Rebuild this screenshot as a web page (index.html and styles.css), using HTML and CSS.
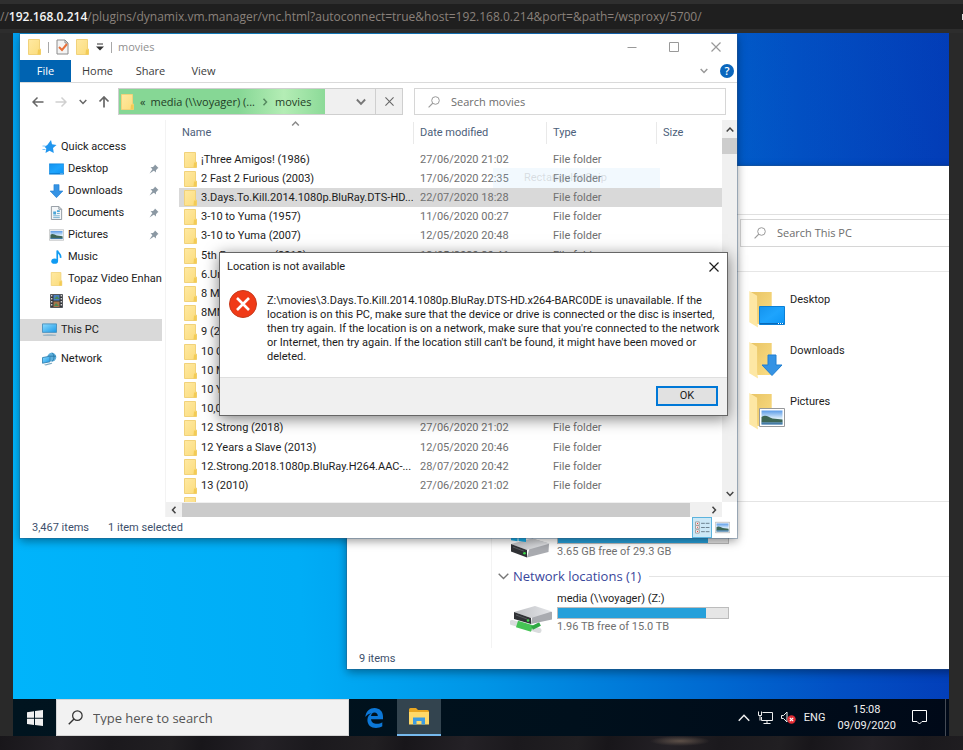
FILE: index.html
```html
<!DOCTYPE html>
<html lang="en">
<head>
<meta charset="utf-8">
<title>Remote desktop</title>
<link rel="stylesheet" href="styles.css">
</head>
<body>
<svg class="sprite" aria-hidden="true">
  <defs>
    <linearGradient id="gFold" x1="0" y1="0" x2="1" y2="1"><stop offset="0" stop-color="#ffe9a2"/><stop offset="1" stop-color="#fbdc7c"/></linearGradient>
    <linearGradient id="gBack" x1="0" y1="0" x2="1" y2="1"><stop offset="0" stop-color="#e8c465"/><stop offset="1" stop-color="#fbdd84"/></linearGradient>
    <linearGradient id="gScreen" x1="0" y1="0" x2="1" y2="1"><stop offset="0" stop-color="#1493ee"/><stop offset=".5" stop-color="#1ea4fd"/><stop offset="1" stop-color="#0c95f5"/></linearGradient>
    <linearGradient id="gPc" x1="0" y1="0" x2="1" y2="1"><stop offset="0" stop-color="#8ddcff"/><stop offset="1" stop-color="#1a98e6"/></linearGradient>
    <linearGradient id="gSky" x1="0" y1="0" x2="0" y2="1"><stop offset="0" stop-color="#5a9be8"/><stop offset=".6" stop-color="#e2f1fb"/><stop offset="1" stop-color="#7fb0d8"/></linearGradient>
    <linearGradient id="gDisk" x1="0" y1="0" x2="1" y2="0"><stop offset="0" stop-color="#bfc1c5"/><stop offset="1" stop-color="#e4e5e8"/></linearGradient>
  </defs>
  <symbol id="folder" viewBox="0 0 13 16"><path d="M.5.5h11v9.500h1v5.500h-12z" fill="url(#gFold)" stroke="#f1d27a"/><path d="M10 10.500h2.500v5H9.500z" fill="#f3cb55"/></symbol>
  <symbol id="check" viewBox="0 0 13 16"><path d="M1 1h8l3 3v11H1z" fill="#f4f4f4" stroke="#8c8c8c"/><path d="M9 1v3h3" fill="none" stroke="#8c8c8c"/><path d="M3 8l3 3 5-6" fill="none" stroke="#e8703a" stroke-width="2"/></symbol>
  <symbol id="menu" viewBox="0 0 8 8"><path d="M1 1h6" stroke="#333" stroke-width="1"/><path d="M0 3.500h8l-4 4z" fill="#333"/></symbol>
  <symbol id="min" viewBox="0 0 10 10"><path d="M.5 5.500h9" stroke="currentColor"/></symbol>
  <symbol id="max" viewBox="0 0 10 10"><path d="M.5.5h9v9h-9z" fill="none" stroke="currentColor"/></symbol>
  <symbol id="close" viewBox="0 0 10 10"><path d="M.5.5l9 9m0-9l-9 9" stroke="currentColor" stroke-width="1.200"/></symbol>
  <symbol id="down" viewBox="0 0 8 8"><path d="M.7 2L4 5.500 7.300 2" fill="none" stroke="currentColor" stroke-width="1.500"/></symbol>
  <symbol id="thinDown" viewBox="0 0 8 8"><path d="M.5 2L4 5.500 7.500 2" fill="none" stroke="currentColor"/></symbol>
  <symbol id="up" viewBox="0 0 8 8"><path d="M.7 5.500L4 2l3.300 3.500" fill="none" stroke="currentColor" stroke-width="1.500"/></symbol>
  <symbol id="thinUp" viewBox="0 0 8 8"><path d="M.5 5.800L4 2.200l3.500 3.600" fill="none" stroke="currentColor"/></symbol>
  <symbol id="left" viewBox="0 0 8 8"><path d="M5.500.7L2.500 4l3 3.300" fill="none" stroke="currentColor" stroke-width="1.500"/></symbol>
  <symbol id="right" viewBox="0 0 8 8"><path d="M2.500.7L5.500 4l-3 3.300" fill="none" stroke="currentColor" stroke-width="1.500"/></symbol>
  <symbol id="arrowL" viewBox="0 0 12 12"><path d="M11.500 6H1.200M5.500 1.500L1 6l4.500 4.500" fill="none" stroke="currentColor" stroke-width="1.500"/></symbol>
  <symbol id="arrowR" viewBox="0 0 12 12"><path d="M.5 6h10.300M6.500 1.500L11 6l-4.500 4.500" fill="none" stroke="currentColor" stroke-width="1.500"/></symbol>
  <symbol id="arrowU" viewBox="0 0 12 12"><path d="M6 11.500V1.200M1.500 5.500L6 1l4.500 4.500" fill="none" stroke="currentColor" stroke-width="1.700"/></symbol>
  <symbol id="lens" viewBox="0 0 12 12"><circle cx="7.500" cy="4.500" r="3.800" fill="none" stroke="currentColor"/><path d="M4.800 7.200L.6 11.400" stroke="currentColor" stroke-width="1.200"/></symbol>
  <symbol id="star" viewBox="0 0 14 14"><path d="M8.500 0l1 4.300L14 5l-3.500 3 .8 5-4.300-2.200L3 13l.8-4.600L2 6.800 4.800 5z" fill="#2196ee"/><path d="M0 6h3M0 9.500h3" stroke="#7cc3f7"/></symbol>
  <symbol id="pin" viewBox="0 0 10 10"><path d="M6 .5L9.500 4l-1 .6L7 6.200 6.800 8.500 1.500 3.200 4 3 5.500 1.500zM3.500 5L5 6.500.5 9.500z" fill="#8b98a3"/></symbol>
  <symbol id="screen" viewBox="0 0 26 19"><path d="M.5.5h25v18H.5z" fill="url(#gScreen)" stroke="#0b7fd6"/><path d="M1 17.500h24" stroke="#0869b8"/><path d="M19 17.500h5" stroke="#fff" stroke-dasharray="1 1"/></symbol>
  <symbol id="dl" viewBox="0 0 22 22"><path d="M7 1h8v10h6L11 21.500 1 11h6z" fill="#3593e4" stroke="#1f7fd2"/></symbol>
  <symbol id="doc" viewBox="0 0 12 15"><path d="M.5.5h8l3 3v11H.5z" fill="#f5f7f9" stroke="#8e979e"/><path d="M8.500.5v3h3" fill="none" stroke="#8e979e"/><path d="M2.500 6h3v3h-3zM6.500 4.500h3v2h-3z" fill="#4ba6d8"/><path d="M6.500 8h3M2.500 10.500h7M2.500 12.500h7" stroke="#69aacc"/></symbol>
  <symbol id="pic" viewBox="0 0 26 19"><path d="M.5.5h25v18H.5z" fill="#fff" stroke="#96999c"/><path d="M2.500 2.500h21v14h-21z" fill="url(#gSky)"/><path d="M2.500 9c4-3 7 0 11 1.500l10 1v3h-21z" fill="#3d6655"/><path d="M2.500 14.500h21v2h-21z" fill="#457ba6"/></symbol>
  <symbol id="note" viewBox="0 0 12 15"><ellipse cx="4" cy="12" rx="3.600" ry="2.800" fill="#109bf2"/><path d="M6.800 12V.5c.5 3 4.500 3.500 3.500 8" fill="none" stroke="#109bf2" stroke-width="1.800"/></symbol>
  <symbol id="film" viewBox="0 0 13 14"><path d="M.5.5h12v13H.5z" fill="#33363b" stroke="#55585c"/><path d="M3.500 1h6v5.500h-6z" fill="#4b7fc0"/><path d="M3.500 7.500h6V13h-6z" fill="#a8744a"/><path d="M4 5l3-3 2.500 3zM4 12l2-3 3 3z" fill="#4c8a55"/><path d="M1.700 1v12M11.300 1v12" stroke="#dcdcdc" stroke-width="1.300" stroke-dasharray="1.500 1.500"/></symbol>
  <symbol id="pc" viewBox="0 0 16 14"><path d="M.5.5h15v9H.5z" fill="url(#gPc)" stroke="#4a90bd"/><path d="M1 13c3-1.500 11-1.500 14 0z" fill="#8eb0c6"/><path d="M1 12.500h14" stroke="#9db4c3"/></symbol>
  <symbol id="net" viewBox="0 0 16 14"><circle cx="10.500" cy="5" r="4.700" fill="#5fb0dc"/><path d="M10.500.3c3 2 3 7.500 0 9.400M6 4h9" stroke="#2a79a8" fill="none"/><path d="M.5 5.500l8-1.500v6l-8 1.500z" fill="url(#gPc)" stroke="#3a86b4"/><path d="M2 13l8-2 1 1-7 2z" fill="#7fa9c0"/></symbol>
  <symbol id="bigFolder" viewBox="0 0 24 38"><path d="M1 1h22v33H8z" fill="url(#gBack)"/><path d="M0 0l8 5v26l1 6.500L0 32z" fill="#fde7a4"/></symbol>
  <symbol id="disk" viewBox="0 0 41 21"><path d="M22 1.500l17 5-.5 8.500L17 20.500z" fill="#a9abb0"/><path d="M1 7L22 1.500l18 5L17 13z" fill="url(#gDisk)"/><path d="M1 7l16 6v7.500L1 14.500z" fill="#303236"/><path d="M3 10l11 4.200" stroke="#55585c"/><circle cx="14.500" cy="16.300" r="1.300" fill="#3ddb4a"/></symbol>
  <symbol id="win" viewBox="0 0 16 16"><path d="M0 2.200l7-1v6.500H0zM8 1l8-1v7.700H8zM0 8.700h7v6.400l-7-1zM8 8.700h8V16l-8-1.100z" fill="currentColor"/></symbol>
  <symbol id="netdisk" viewBox="0 0 43 29"><path d="M2 17.500l27 8" stroke="#d9dcdd" stroke-width="5" stroke-linecap="round"/><path d="M7 19l15 4.500" stroke="#45c455" stroke-width="7"/><path d="M22 23l8-4" stroke="#2fa843" stroke-width="4"/><path d="M24 2l18 5v7.500L21 19z" fill="#a9abb0"/><path d="M4 7L25 1l17 5.500L21 13z" fill="url(#gDisk)"/><path d="M4 7l17 6v6L4 14z" fill="#303236"/><path d="M6 10l11 4" stroke="#55585c"/><circle cx="18" cy="15.500" r="1.300" fill="#3ddb4a"/></symbol>
  <symbol id="details" viewBox="0 0 16 14"><path d="M.5 1h4v3.500h-4zM.5 5h4v3.500h-4zM.5 9.500h4V13h-4z" fill="#fff" stroke="#9a9a9a"/><path d="M2 2.700h1.200M2 6.800h1.200M2 11.300h1.200" stroke="#d33"/><path d="M6.500 2.500h9M6.500 7h9M6.500 11.500h9" stroke="#657987" stroke-dasharray="4 1"/></symbol>
  <symbol id="edge" viewBox="0 0 18 20"><path d="M.3 9C1 3 5 0 9.500 0 14.500 0 18 3.500 18 8.500v2.700H6c.3 3 2.800 4.600 6 4.600 2 0 3.800-.5 5.300-1.500v4c-1.800 1.100-4 1.600-6.300 1.600-5 0-8.600-3-8.600-8 0-3.200 1.800-5.500 4.200-6.700C3.700 5.700 1.700 7 .3 9zM6 8h6.800c0-2.200-1.300-3.600-3.300-3.600S6.300 6 6 8z" fill="#0c78d8"/></symbol>
  <symbol id="explorer" viewBox="0 0 20 17"><path d="M0 1.500Q0 0 1.500 0H7l2 2h9.500Q20 2 20 3.500V16H0z" fill="#e9a721"/><path d="M0 4h20v12.500H0z" fill="#ffd968"/><path d="M4 16.500V9.500h12v7h-3.500V13h-5v3.500z" fill="#3d9be0"/></symbol>
  <symbol id="monitor" viewBox="0 0 15 13"><path d="M4.500 1.500h10v8h-11V6M9 9.500v3M5.500 12.500h7M.5.5v4h3v-4M2 4.500v5" fill="none" stroke="#eee"/></symbol>
  <symbol id="mute" viewBox="0 0 15 13"><path d="M.5 4.500h2L6 1v10L2.500 7.500h-2z" fill="none" stroke="#eee"/><circle cx="10.500" cy="8.500" r="4.200" fill="#e12b33"/><path d="M8.800 6.800l3.400 3.400m0-3.400l-3.400 3.400" stroke="#fff" stroke-width="1.200"/></symbol>
  <symbol id="bubble" viewBox="0 0 15 15"><path d="M.5.5h14v11H10L7.500 14 5 11.500H.5z" fill="none" stroke="#fff"/></symbol>
  <symbol id="error" viewBox="0 0 28 28"><circle cx="14" cy="14" r="13.500" fill="#f03a17" stroke="#c63a1c"/><path d="M8 8l12 12m0-12L8 20" stroke="#fff" stroke-width="2.600"/></symbol>
</svg>

<header class="urlbar"><span>//<b>192.168.0.214</b>/plugins/dynamix.vm.manager/vnc.html?autoconnect=true&amp;host=192.168.0.214&amp;port=&amp;path=/wsproxy/5700/</span><i class="urlbar-mark"></i></header>

<main class="screen">
  <div class="desktop">

    <section class="window pc-window">
      <div class="pc-ribbon"></div>
      <div class="pc-tools"><label class="search pc-search"><svg><use href="#lens"/></svg><input type="search" placeholder="Search This PC" aria-label="Search This PC"></label></div>
      <div class="pc-body">
        <div class="pc-nav"></div>
        <div class="pc-content">
          <div class="pc-folders">
            <a class="place" href="#"><span class="place-icon"><svg class="back"><use href="#bigFolder"/></svg><svg class="badge"><use href="#screen"/></svg></span>Desktop</a>
            <a class="place" href="#"><span class="place-icon"><svg class="back"><use href="#bigFolder"/></svg><svg class="badge arrow"><use href="#dl"/></svg></span>Downloads</a>
            <a class="place" href="#"><span class="place-icon"><svg class="back"><use href="#bigFolder"/></svg><svg class="badge"><use href="#pic"/></svg></span>Pictures</a>
          </div>
          <div class="group-line"></div>
          <div class="drive local">
            <span class="drive-icon"><svg class="win-mark"><use href="#win"/></svg><svg class="disk"><use href="#disk"/></svg></span>
            <div class="drive-info"><div class="meter"><div style="width:88%"></div></div><p>3.65 GB free of 29.3 GB</p></div>
          </div>
          <h2><svg><use href="#thinDown"/></svg>Network locations (1)</h2>
          <div class="drive">
            <svg class="netdisk"><use href="#netdisk"/></svg>
            <div class="drive-info"><h3>media (\\voyager) (Z:)</h3><div class="meter"><div style="width:87%"></div></div><p>1.96 TB free of 15.0 TB</p></div>
          </div>
        </div>
      </div>
      <footer class="status"><span>9 items</span></footer>
    </section>

    <section class="window movies-window">
      <div class="titlebar">
        <svg class="fold"><use href="#folder"/></svg><i class="bar"></i><svg class="fold"><use href="#check"/></svg><svg class="fold"><use href="#folder"/></svg><svg class="tiny"><use href="#menu"/></svg><i class="bar"></i><span class="title">movies</span>
        <div class="win-buttons"><button aria-label="Minimise"><svg><use href="#min"/></svg></button><button aria-label="Maximise"><svg><use href="#max"/></svg></button><button aria-label="Close"><svg><use href="#close"/></svg></button></div>
      </div>
      <nav class="tabs"><button class="file">File</button><button>Home</button><button>Share</button><button>View</button><div class="tabs-end"><svg class="tiny"><use href="#down"/></svg><button class="help" aria-label="Help">?</button></div></nav>
      <div class="toolbar">
        <div class="history"><svg><use href="#arrowL"/></svg><svg class="off"><use href="#arrowR"/></svg><svg class="tiny"><use href="#down"/></svg><svg><use href="#arrowU"/></svg></div>
        <div class="address"><div class="progress"><svg class="fold"><use href="#folder"/></svg><span class="chev">«</span><span>media (\\voyager) (...</span><svg class="tiny sep"><use href="#right"/></svg><span>movies</span></div><button class="drop" aria-label="Previous locations"><svg><use href="#down"/></svg></button><button class="stop" aria-label="Stop"><svg><use href="#close"/></svg></button></div>
        <label class="search"><svg><use href="#lens"/></svg><input type="search" placeholder="Search movies" aria-label="Search movies"></label>
      </div>
      <div class="explorer">
        <ul class="nav">
          <li class="root"><svg><use href="#star"/></svg><span>Quick access</span></li>
          <li><svg><use href="#screen"/></svg><span>Desktop</span><svg class="pin"><use href="#pin"/></svg></li>
          <li><svg><use href="#dl"/></svg><span>Downloads</span><svg class="pin"><use href="#pin"/></svg></li>
          <li><svg><use href="#doc"/></svg><span>Documents</span><svg class="pin"><use href="#pin"/></svg></li>
          <li><svg><use href="#pic"/></svg><span>Pictures</span><svg class="pin"><use href="#pin"/></svg></li>
          <li><svg><use href="#note"/></svg><span>Music</span></li>
          <li><svg><use href="#folder"/></svg><span>Topaz Video Enhanc</span></li>
          <li><svg><use href="#film"/></svg><span>Videos</span></li>
          <li class="root gap selected"><svg><use href="#pc"/></svg><span>This PC</span></li>
          <li class="root gap"><svg><use href="#net"/></svg><span>Network</span></li>
        </ul>
        <div class="files">
          <div class="list">
            <svg class="sort"><use href="#up"/></svg>
            <table>
              <colgroup><col class="c-name"><col class="c-date"><col class="c-type"><col></colgroup>
              <thead><tr><th>Name</th><th>Date modified</th><th>Type</th><th>Size</th></tr></thead>
              <tbody>
                <tr><td><svg><use href="#folder"/></svg>¡Three Amigos! (1986)</td><td>27/06/2020 21:02</td><td>File folder</td><td></td></tr>
                <tr><td><svg><use href="#folder"/></svg>2 Fast 2 Furious (2003)</td><td>17/06/2020 22:35</td><td>File folder</td><td></td></tr>
                <tr class="selected"><td><svg><use href="#folder"/></svg>3.Days.To.Kill.2014.1080p.BluRay.DTS-HD....</td><td>22/07/2020 18:28</td><td>File folder</td><td></td></tr>
                <tr><td><svg><use href="#folder"/></svg>3-10 to Yuma (1957)</td><td>11/06/2020 00:27</td><td>File folder</td><td></td></tr>
                <tr><td><svg><use href="#folder"/></svg>3-10 to Yuma (2007)</td><td>12/05/2020 20:48</td><td>File folder</td><td></td></tr>
                <tr><td><svg><use href="#folder"/></svg>5th Passenger (2018)</td><td>12/05/2020 20:46</td><td>File folder</td><td></td></tr>
                <tr><td><svg><use href="#folder"/></svg>6.Un</td><td></td><td></td><td></td></tr>
                <tr><td><svg><use href="#folder"/></svg>8 Mi</td><td></td><td></td><td></td></tr>
                <tr><td><svg><use href="#folder"/></svg>8MM</td><td></td><td></td><td></td></tr>
                <tr><td><svg><use href="#folder"/></svg>9 (20</td><td></td><td></td><td></td></tr>
                <tr><td><svg><use href="#folder"/></svg>10 Cl</td><td></td><td></td><td></td></tr>
                <tr><td><svg><use href="#folder"/></svg>10 Mi</td><td></td><td></td><td></td></tr>
                <tr><td><svg><use href="#folder"/></svg>10 Ye</td><td></td><td></td><td></td></tr>
                <tr><td><svg><use href="#folder"/></svg>10,000 BC (2008)</td><td></td><td></td><td></td></tr>
                <tr><td><svg><use href="#folder"/></svg>12 Strong (2018)</td><td>27/06/2020 21:02</td><td>File folder</td><td></td></tr>
                <tr><td><svg><use href="#folder"/></svg>12 Years a Slave (2013)</td><td>12/05/2020 20:46</td><td>File folder</td><td></td></tr>
                <tr><td><svg><use href="#folder"/></svg>12.Strong.2018.1080p.BluRay.H264.AAC-...</td><td>28/07/2020 20:42</td><td>File folder</td><td></td></tr>
                <tr><td><svg><use href="#folder"/></svg>13 (2010)</td><td>27/06/2020 21:02</td><td>File folder</td><td></td></tr>
                <tr><td><svg><use href="#folder"/></svg></td><td></td><td></td><td></td></tr>
              </tbody>
            </table>
            <div class="ghost">Rectangular Snip</div>
          </div>
          <div class="vscroll"><svg><use href="#up"/></svg><i></i><svg><use href="#down"/></svg></div>
          <div class="hscroll"><svg><use href="#left"/></svg><i></i><svg><use href="#right"/></svg></div>
        </div>
      </div>
      <footer class="status"><span>3,467 items</span><span>1 item selected</span><div class="views"><button class="on" aria-label="Details"><svg><use href="#details"/></svg></button><button aria-label="Large icons"><svg><use href="#pic"/></svg></button></div></footer>
    </section>

    <section class="dialog" role="dialog" aria-labelledby="dialog-title">
      <header><h1 id="dialog-title">Location is not available</h1><button aria-label="Close"><svg><use href="#close"/></svg></button></header>
      <div class="message"><svg><use href="#error"/></svg><p>Z:\movies\3.Days.To.Kill.2014.1080p.BluRay.DTS-HD.x264-BARC0DE is unavailable. If the<br>location is on this PC, make sure that the device or drive is connected or the disc is inserted,<br>then try again. If the location is on a network, make sure that you're connected to the network<br>or Internet, then try again. If the location still can't be found, it might have been moved or<br>deleted.</p></div>
      <footer><button class="ok">OK</button></footer>
    </section>
  </div>

  <div class="taskbar">
    <button class="start" aria-label="Start"><svg><use href="#win"/></svg></button>
    <label class="task-search"><svg><use href="#lens"/></svg><input type="search" placeholder="Type here to search" aria-label="Type here to search"></label>
    <button class="app" aria-label="Edge"><svg><use href="#edge"/></svg></button>
    <button class="app active" aria-label="File Explorer"><svg><use href="#explorer"/></svg></button>
    <div class="tray"><svg class="caret"><use href="#thinUp"/></svg><svg><use href="#monitor"/></svg><svg><use href="#mute"/></svg><span>ENG</span><time>15:08<br>09/09/2020</time><svg class="bubble"><use href="#bubble"/></svg></div>
  </div>
</main>
<div class="wall"></div>
</body>
</html>
```
FILE: styles.css
```css
* { box-sizing: border-box; }

body {
  margin: 0;
  min-height: 100vh;
  display: flex;
  flex-direction: column;
  background: #292929;
  color: #1c1c1c;
  font: 11px/14px "Open Sans", "Noto Sans", sans-serif;
  overflow: hidden;
}

svg { display: block; flex: none; width: 12px; height: 12px; }
.sprite { position: absolute; width: 0; height: 0; }
button { border: 0; padding: 0; background: none; font: inherit; color: inherit; display: flex; align-items: center; justify-content: center; }
input { border: 0; padding: 0; background: none; font: inherit; color: inherit; outline: 0; min-width: 0; flex: 1; }
input::placeholder { color: #6d6d6d; opacity: 1; }
h1, h2, h3, p, ul { margin: 0; padding: 0; font-weight: normal; font-size: inherit; }
a { color: inherit; text-decoration: none; }

.urlbar {
  height: 33px;
  border-top: 4px solid #2f2f2f;
  border-bottom: 4px solid #2d2d2d;
  background: #1f1f1f;
  display: flex;
  align-items: center;
  justify-content: space-between;
  font-size: 12px;
  line-height: 25px;
  color: #8a817b;
  white-space: nowrap;
}
.urlbar b { color: #f4f4f4; font-weight: 600; }
.urlbar-mark { width: 1px; height: 6px; background: #ddd; }

.screen { flex: 1; margin: 0 14px 0 13px; display: flex; flex-direction: column; }
.desktop {
  flex: 1;
  position: relative;
  overflow: hidden;
  background:
    linear-gradient(180deg, rgba(0, 80, 190, .2), transparent 60%),
    linear-gradient(86deg, #00b4fb 0%, #00adf6 30%, #0095e6 48%, #0068d0 72%, #0250c4 84%, #0338b5 100%);
}
.wall {
  height: 14px;
  background: radial-gradient(ellipse 30px 5px at 680px 5px, #5d5048, transparent), repeating-linear-gradient(100deg, #18161a 0, #242126 60px, #1b191d 110px, #211f22 170px, #18161a 200px);
}

.window { position: absolute; background: #fff; display: flex; flex-direction: column; box-shadow: 0 0 0 1px rgba(50, 90, 130, .35), 0 3px 9px rgba(0, 0, 0, .4); }
.movies-window { left: 7px; top: 1px; width: 77%; max-width: 717px; }
.pc-window { left: 334px; top: 133px; right: -40px; }

.titlebar { height: 26px; padding-left: 8px; display: flex; align-items: center; gap: 7px; color: #8f8f8f; }
.fold { width: 13px; height: 16px; }
.bar { width: 1px; height: 11px; background: #a8a8a8; }
.tiny { width: 8px; height: 8px; }
.title { margin-left: -1px; }
.win-buttons { margin-left: auto; display: flex; }
.win-buttons button { width: 42px; height: 26px; color: #999; }
.win-buttons svg { width: 10px; height: 10px; }

.tabs { height: 23px; display: flex; border-bottom: 1px solid #dadada; color: #3c3c3c; }
.tabs > button { width: 53px; }
.tabs .file { width: 51px; background: #0063b1; color: #fff; }
.tabs-end { margin-left: auto; padding-right: 3px; display: flex; align-items: center; gap: 12px; color: #999; }
.help { width: 14px; height: 14px; border-radius: 50%; background: #0a66bd; color: #fff; font-weight: 600; }

.toolbar { height: 37px; padding: 5px 11px 5px 12px; display: flex; gap: 11px; }
.history { width: 78px; display: flex; align-items: center; justify-content: space-between; color: #666; }
.history .off { color: #d0d0d0; }
.address { width: 285px; border: 1px solid #cfcfcf; background: #f0f0f0; display: flex; }
.progress { flex: 1; padding-left: 2px; display: flex; align-items: center; gap: 6px; background: linear-gradient(90deg, #86d795 0%, #86d795 58%, #b4edb5 80%, #8cda98 100%); color: #1f3d26; white-space: nowrap; }
.history + .address { margin-left: -3px; }
.chev { margin-right: -1px; }
.sep { color: #568a60; }
.drop { width: 50px; padding-left: 22px; color: #777; }
.drop svg { width: 10px; height: 10px; }
.stop { width: 27px; border-left: 1px solid #cfcfcf; color: #666; }
.stop svg { width: 9px; height: 9px; }
.search { flex: 1; padding-left: 13px; border: 1px solid #d6d6d6; display: flex; align-items: center; gap: 11px; color: #9a9a9a; }

.explorer { display: flex; height: 397px; }
.nav { list-style: none; width: 146px; padding: 16px 3px 0 0; border-right: 1px solid #f3f3f3; flex: none; }
.nav li { height: 22px; padding-left: 29px; display: flex; align-items: center; gap: 4px; overflow: hidden; white-space: nowrap; font-family: Roboto, sans-serif; }
.nav li svg { width: 15px; height: 14px; }
.nav .root { padding-left: 22px; }
.nav .root svg { width: 15px; }
.nav .gap { margin-top: 7px; }
.nav .selected, tr.selected { background: #d9d9d9; }
.nav li .pin { width: 10px; height: 10px; margin: 0 3px 0 auto; }

.files { flex: 1; min-width: 0; display: grid; grid-template: minmax(0, 1fr) 15px / minmax(0, 1fr) 15px; }
.list { position: relative; overflow: hidden; padding-left: 13px; font-family: Roboto, sans-serif; }
.sort { position: absolute; left: 125px; top: 0; width: 9px; height: 8px; color: #8a8a8a; }
table { width: 100%; table-layout: fixed; border-collapse: collapse; white-space: nowrap; }
.c-name { width: 234px; }
.c-date { width: 133px; }
.c-type { width: 110px; }
th { height: 30px; padding: 0 0 4px 7px; text-align: left; font-weight: normal; color: #4c607a; background: linear-gradient(#e9e9e9, #e9e9e9) left 0 top 2px / 1px 22px no-repeat; }
th:first-child { padding-left: 3px; background: none; }
td { height: 19px; padding: 0 0 0 7px; color: #707070; overflow: hidden; }
td:first-child { padding-left: 5px; color: #1c1c1c; display: flex; align-items: center; gap: 4px; }
td svg { width: 13px; height: 16px; }
tbody tr:nth-child(5n) td { height: 20px; }
.ghost { position: absolute; left: 327px; top: 48px; width: 167px; height: 20px; padding: 3px 31px; color: rgba(120, 120, 120, .22); background: rgba(170, 215, 245, .15); white-space: nowrap; }

.vscroll { background: #f0f0f0; display: flex; flex-direction: column; align-items: center; justify-content: space-between; padding: 6px 0 4px; color: #444; }
.vscroll svg, .hscroll svg { width: 8px; height: 8px; }
.vscroll i { width: 15px; height: 16px; margin: 4px 0 auto; background: #cdcdcd; }
.hscroll { background: #f0f0f0; display: flex; align-items: center; padding: 0 4px; gap: 4px; color: #444; }
.hscroll i { flex: 1; margin-right: 16px; height: 14px; background: #cbcbcb; }

.status { height: 21px; padding-left: 12px; display: flex; align-items: center; gap: 19px; color: #3c4f6b; font-family: Roboto, sans-serif; }
.views { margin-left: auto; display: flex; padding-right: 5px; }
.views button { width: 20px; height: 21px; }
.views .on { background: #cce8f6; border: 1px solid #5cb3dd; }
.views svg { width: 15px; height: 13px; }

.pc-ribbon { height: 49px; border-bottom: 1px solid #e0e0e0; }
.pc-tools { height: 57px; padding: 4px 0 24px 393px; border-bottom: 1px solid #e6e6e6; display: flex; }
.pc-search { padding-left: 13px; }
.pc-body { display: flex; height: 376px; }
.pc-nav { width: 145px; border-right: 1px solid #f3f3f3; }
.pc-content { flex: 1; min-width: 0; font-family: Roboto, sans-serif; }
.pc-folders { padding: 19px 0 0 257px; display: grid; grid-auto-rows: 51px; height: 229px; align-content: start; }
.place { display: flex; gap: 5px; line-height: 18px; }
.place-icon { position: relative; width: 36px; height: 38px; }
.back { width: 24px; height: 37px; }
.badge { position: absolute; right: 0; top: 15px; width: 26px; height: 19px; }
.badge.arrow { right: 2px; top: 12px; width: 22px; height: 22px; }
.group-line { height: 1px; background: #e4e4e4; }
.drive { padding-left: 18px; display: flex; gap: 4px; color: #707070; }
.drive.local { padding-top: 35px; }
.drive-icon { position: relative; width: 43px; }
.disk { width: 41px; height: 21px; }
.win-mark { position: absolute; left: 1px; top: -10px; width: 15px; height: 15px; color: #14b1ee; }
.netdisk { width: 43px; height: 29px; margin-top: 14px; }
.drive-info { width: 172px; }
.drive-info h3 { color: #1c1c1c; line-height: 16px; }
.meter { height: 12px; border: 1px solid #bcbcbc; background: #e6e6e6; }
.meter div { height: 100%; background: #26a0da; }
.drive-info p { line-height: 16px; }
.local .meter { margin-top: -5px; }
h2 { height: 20px; margin: 6px 0 5px 6px; display: flex; align-items: center; gap: 4px; font: 13px/20px "Open Sans", sans-serif; color: #39469b; white-space: nowrap; }
h2 svg { width: 11px; height: 11px; color: #777; }
h2::after { content: ""; flex: 1; height: 1px; margin-left: 4px; background: #e4e4e4; }

.dialog { position: absolute; left: 206px; top: 219px; width: 509px; background: #fff; border: 1px solid #666; box-shadow: 0 3px 14px rgba(0, 0, 0, .5); white-space: nowrap; font-family: Roboto, sans-serif; }
.dialog header { height: 28px; padding: 0 8px 0 7px; display: flex; align-items: center; justify-content: space-between; }
.dialog header svg { width: 10px; height: 10px; }
.message { height: 96px; padding: 9px; display: flex; gap: 10px; }
.message svg { width: 28px; height: 28px; }
.message p { padding-top: 4px; }
.dialog footer { padding: 8px 9px 9px; background: #f0f0f0; border-top: 1px solid #dfdfdf; display: flex; justify-content: flex-end; }
.ok { width: 62px; height: 20px; border: 2px solid #0078d7; background: #e1e1e1; }

.taskbar { height: 37px; display: flex; background: linear-gradient(90deg, #00141f, #00101c 60%, #000918); color: #f0f0f0; }
.start { width: 43px; }
.start svg { width: 16px; height: 16px; }
.task-search { flex: 0 1 293px; padding-left: 11px; display: flex; align-items: center; gap: 10px; background: #f2f2f2; border: 1px solid #d5d5d5; color: #333; font-size: 13px; }
.task-search svg { width: 15px; height: 15px; }
.task-search input::placeholder { color: #555; }
.app { width: 48px; padding-left: 2px; }
.app svg { width: 18px; height: 20px; }
.app.active { width: 44px; padding: 0; background: #33444f; border-bottom: 2px solid #76b9ed; }
.app.active svg { width: 20px; height: 17px; }
.tray { margin-left: auto; padding-right: 18px; display: flex; align-items: center; gap: 8px; border-right: 1px solid #454b55; margin-right: 3px; font-family: Roboto, sans-serif; }
.tray svg { width: 15px; height: 13px; }
.tray .caret { width: 12px; height: 12px; }
.tray time { text-align: center; line-height: 16px; margin: 0 8px 0 4px; }
.tray .bubble { height: 15px; }
```
